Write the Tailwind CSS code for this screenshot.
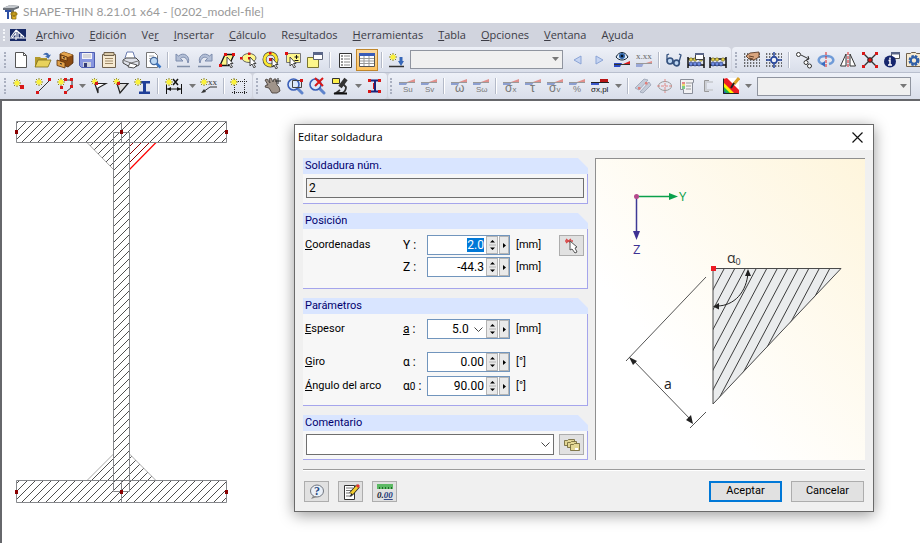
<!DOCTYPE html>
<html lang="es">
<head>
  <meta charset="UTF-8">
  <meta name="viewport" content="width=device-width, initial-scale=1.0">
  <title>SHAPE-THIN 8.21.01 x64 - [0202_model-file]</title>
  <script src="https://cdn.jsdelivr.net/npm/@tailwindcss/browser@4"></script>
  <script>
    // El primer campo se abre con el valor seleccionado
    document.addEventListener("DOMContentLoaded", () => {
      const campo = document.getElementById("coordY");
      campo.focus();
      campo.select();
    });
  </script>
</head>
<body class="flex h-screen flex-col overflow-hidden bg-white font-['Open_Sans',sans-serif] text-[11px] text-[#3c3c46]">

  <!-- Símbolos compartidos por varios iconos -->
  <svg class="hidden">
    <symbol id="star" viewBox="0 0 8 8"><path d="M4 0v8M0 4h8M1 1l6 6M7 1l-6 6" stroke="#8a8420" stroke-width="1"/><circle cx="4" cy="4" r="2.6" fill="#fbf23c"/></symbol>
    <symbol id="wedge" viewBox="0 0 18 6"><path d="M1 3h9l-2 3H1z" fill="#8c9fd0"/><path d="M9 3l8-3v3z" fill="#e0908c"/><path d="M1 3.500h16" stroke="#999"/></symbol>
    <symbol id="caret" viewBox="0 0 7 4"><path d="M0 0h7l-3.500 4z" fill="#777"/></symbol>
    <symbol id="abacus" viewBox="0 0 18 12"><path d="M1 1v11M17 1v11M1 3h16M1 9h16" stroke="#111" stroke-width="1.5"/><g fill="#e6d34a" stroke="#6b6425" stroke-width=".6"><circle cx="4" cy="3.500" r="1.700"/><circle cx="8" cy="3.500" r="1.700"/><circle cx="14" cy="3.500" r="1.700"/></g><g fill="#6f8ce0" stroke="#1a2c70" stroke-width=".6"><circle cx="4" cy="8" r="2"/><circle cx="8" cy="8" r="2"/><circle cx="12" cy="8" r="2"/></g></symbol>
    <symbol id="lens" viewBox="0 0 18 18"><path d="M11 11l5 5" stroke="#5f84cc" stroke-width="3" stroke-linecap="round"/><circle cx="7.500" cy="7.500" r="5.500" fill="#dbe8fb" stroke="#3a5fb8" stroke-width="1.600"/></symbol>
    <symbol id="arrow" viewBox="0 0 8 11"><path d="M1 0v9l2-2 2 4 1.500-1-2-3.500H7z" fill="#fff" stroke="#333" stroke-width=".9"/></symbol>
    <symbol id="dots" viewBox="0 0 18 18"><path d="M1 3h16M1 6h16M1 9h16M1 12h16M1 15h16" stroke="#444" stroke-width="1.300" stroke-dasharray="1.300 1.700"/></symbol>
    <symbol id="chevron" viewBox="0 0 9 5"><path d="M.500 .500l4 4 4-4" fill="none" stroke="#444"/></symbol>
  </svg>

  <!-- Título -->
  <header class="flex h-[23px] shrink-0 items-center gap-1 bg-white pl-[3px] text-[#999]">
    <svg class="size-4" viewBox="0 0 16 16"><path d="M0 4l7-3 9 1v2l-5 2v8l-3 1V6L0 6z" fill="#6b7077"/><path d="M0 4l7-3 9 1-5 2z" fill="#c3c7cc"/><path d="M2 6h6v2H6v7H4V8H2z" fill="#2e50a5"/><path d="M9 8h4v7H9zM8 9h6v2H8z" fill="#e2b52a" stroke="#8b6a10" stroke-width=".7"/><path d="M10 12h2" stroke="#6b5010"/></svg>
    <h1 class="font-[Lato,sans-serif] text-xs">SHAPE-THIN 8.21.01 x64 - [0202_model-file]</h1>
  </header>

  <!-- Menú -->
  <nav class="flex h-6 shrink-0 items-center bg-[#d1d4de] pl-[3px]">
    <span class="h-3 border-l-2 border-dotted border-[#f4f6fa]"></span>
    <svg class="ml-[5px] mr-[10px] h-3 w-4" viewBox="0 0 16 12"><path d="M0 0h16v12H0z" fill="#182a66"/><path d="M0 9h16M6 1v10M6 1L1 8M6 1l8 7M6 4l-4 5M8 3v6M11 6v3" stroke="#fff" stroke-width="1.100"/></svg>
    <div class="flex gap-[15px]">
      <a href="#"><u>A</u>rchivo</a>
      <a href="#"><u>E</u>dición</a>
      <a href="#">Ve<u>r</u></a>
      <a href="#"><u>I</u>nsertar</a>
      <a href="#"><u>C</u>álculo</a>
      <a href="#">Res<u>u</u>ltados</a>
      <a href="#"><u>H</u>erramientas</a>
      <a href="#"><u>T</u>abla</a>
      <a href="#"><u>O</u>pciones</a>
      <a href="#"><u>V</u>entana</a>
      <a href="#">A<u>y</u>uda</a>
    </div>
  </nav>

  <!-- Barra de herramientas 1 -->
  <div class="flex h-[26px] shrink-0 overflow-hidden bg-[#d1d4de]">
    <div class="flex shrink-0 items-center rounded-r border-b border-[#b9bfce] bg-linear-to-b from-[#eef1f8] to-[#d9deea] pr-[2px]">
      <span class="ml-1 mr-1 h-4 border-l-2 border-dotted border-[#aab0c0]"></span>
      <button class="grid w-[22px] place-items-center" aria-label="Nuevo"><svg class="size-[18px]" viewBox="0 0 18 18"><path d="M3.500 1.500h8l3 3v12h-11z" fill="#fff" stroke="#555"/><path d="M11.500 1.500v3h3" fill="none" stroke="#555"/></svg></button>
      <button class="grid w-[22px] place-items-center" aria-label="Abrir"><svg class="size-[18px]" viewBox="0 0 18 18"><path d="M1 16V6h5l1 1h6v9z" fill="#b39a2c"/><path d="M1 16l3-7h13l-3 7z" fill="#e8d25c" stroke="#7c6c1c" stroke-width=".8"/><path d="M9 4c2-3 5-3 6 0l2-.500-2.500 4L11 5.500l2-.500c-1-1.500-2-1.500-4-1z" fill="#3e6bb0"/></svg></button>
      <button class="grid w-[22px] place-items-center" aria-label="Archivador"><svg class="size-[18px]" viewBox="0 0 18 18"><path d="M4 3l4-2 9 3v8l-5 4-8-3z" fill="#8a4a12" stroke="#4b2708" stroke-width=".8"/><path d="M4 3l4-2 9 3-5 2z" fill="#e3a44d"/><path d="M1 9l8 2.500V17L1 14.500zM5 4l6 2v4L5 8z" fill="#e0a04a" stroke="#5a300a" stroke-width=".8"/><path d="M4 12.500l2 .600M7 6.500l2 .600" stroke="#222"/></svg></button>
      <button class="grid w-[22px] place-items-center" aria-label="Guardar"><svg class="size-[18px]" viewBox="0 0 18 18"><path d="M1.500 1.500h15v15h-13l-2-2z" fill="#8796e0" stroke="#4d5db0"/><path d="M4 2h10v6H4z" fill="#f4f4fa"/><path d="M5 4h8M5 6h8" stroke="#aaa" stroke-width=".8"/><path d="M5 11h8v5H5z" fill="#cfd3dd"/><path d="M6 12h3v4H6z" fill="#333c78"/></svg></button>
      <button class="grid w-[22px] place-items-center" aria-label="Portapapeles"><svg class="size-[18px]" viewBox="0 0 18 18"><path d="M2.500 3.500h13v13h-13z" fill="#f6ead2" stroke="#6f604c"/><path d="M4 1.500h10v3H4z" fill="#d9c9a8" stroke="#6f604c"/><path d="M5 7.500h8M5 10h8M5 12.500h8" stroke="#a08a68"/></svg></button>
      <button class="grid w-[22px] place-items-center" aria-label="Imprimir"><svg class="size-[18px]" viewBox="0 0 18 18"><path d="M3 7L5 1h6l2 6" fill="#fff" stroke="#6a7cb0"/><path d="M1 9l3-2h10l3 3v4l-4 2H8l-7-4z" fill="#dfe2ea" stroke="#444"/><path d="M2 9.500l7 2.500 7-2" fill="none" stroke="#777"/><path d="M8 12l-2 4 6 1 3-3z" fill="#fff" stroke="#333" stroke-width=".8"/></svg></button>
      <button class="grid w-[22px] place-items-center" aria-label="Vista previa"><svg class="size-[18px]" viewBox="0 0 18 18"><path d="M2.500 1.500h8l3 3v12h-11z" fill="#fff" stroke="#777"/><path d="M5 5h5M5 7.500h6M5 10h4" stroke="#aaa"/><circle cx="10" cy="10" r="3.600" fill="#bcd8f4" stroke="#47699c" stroke-width="1.200"/><path d="M12.500 12.500l4 4" stroke="#3b76c4" stroke-width="2.500"/></svg></button>
      <span class="mx-[3px] h-4 w-[2px] border-r border-white bg-[#b4bac8]"></span>
      <button class="grid w-[22px] place-items-center" aria-label="Deshacer"><svg class="size-[18px]" viewBox="0 0 18 18"><path d="M2 3v7h7L6.500 7.500C9 5 13 6 14 12c3-6-4-12-9.500-7z" fill="#b3bfd6" stroke="#7c8cad"/><path d="M3 15.500h13" stroke="#8290aa" stroke-width="1.500"/></svg></button>
      <button class="grid w-[22px] place-items-center" aria-label="Rehacer"><svg class="size-[18px]" viewBox="0 0 18 18"><path d="M16 3v7H9l2.500-2.500C9 5 5 6 4 12 1 6 8 0 13.500 5z" fill="#b3bfd6" stroke="#7c8cad"/><path d="M2 15.500h13" stroke="#8290aa" stroke-width="1.500"/></svg></button>
      <button class="grid w-[22px] place-items-center" aria-label="Selección por rombo"><svg class="size-[18px]" viewBox="0 0 18 18"><path d="M7 3.500h9l-5 11H2z" fill="#fdf68a" stroke="#111" stroke-width="1.300"/><path d="M6 2h3v3H6zM14 2h3v3h-3zM1 13h3v3H1z" fill="#e01010"/><use href="#arrow" x="8" y="6" width="8" height="11"/></svg></button>
      <button class="grid w-[22px] place-items-center" aria-label="Selección por elipse"><svg class="size-[18px]" viewBox="0 0 18 18"><ellipse cx="9" cy="7" rx="7" ry="4.500" fill="#fdf68a" stroke="#666"/><path d="M0 6h2.500v2.500H0zM8 1.500h2.500V4H8zM8 6h2.500v2.500H8z" fill="#e01010"/><use href="#arrow" x="9" y="6" width="8" height="11"/></svg></button>
      <button class="grid w-[22px] place-items-center" aria-label="Selección por corona"><svg class="size-[18px]" viewBox="0 0 18 18"><circle cx="8.500" cy="8.500" r="6" fill="none" stroke="#444" stroke-width="4"/><circle cx="8.500" cy="8.500" r="6" fill="none" stroke="#fbe830" stroke-width="2.600"/><path d="M7 1h2.500v2.500H7zM7 7h3v3H7z" fill="#e01010"/><use href="#arrow" x="9" y="7" width="8" height="11"/></svg></button>
      <button class="grid w-[22px] place-items-center" aria-label="Selección por ventana"><svg class="size-[18px]" viewBox="0 0 18 18"><path d="M2.500 2.500h14v9h-14z" fill="#fdf68a" stroke="#777"/><path d="M10.500 6h4M12.500 4v4M10.500 9.500h4" stroke="#111"/><path d="M1 1h3v3H1z" fill="#e01010"/><use href="#arrow" x="5" y="6" width="8" height="11"/></svg></button>
      <button class="grid w-[22px] place-items-center" aria-label="Ventana nueva"><svg class="size-[18px]" viewBox="0 0 18 18"><path d="M1.500 6.500h11v10h-11z" fill="#fdf68a" stroke="#7a7430"/><path d="M7.500 1.500h9v7h-9z" fill="#fff" stroke="#5c6275"/><path d="M7 1h10v3H7z" fill="#5a6688"/></svg></button>
      <span class="mx-[3px] h-4 w-[2px] border-r border-white bg-[#b4bac8]"></span>
      <button class="grid w-[22px] place-items-center" aria-label="Navegador"><svg class="size-[18px]" viewBox="0 0 18 18"><path d="M3.500 2.500h12v14h-12z" fill="#fff" stroke="#333"/><path d="M5 5h2M5 8h2M5 11h2M5 14h2" stroke="#333"/><path d="M8 5h6M8 8h6M8 11h6M8 14h6" stroke="#888"/></svg></button>
      <button class="grid h-[22px] w-[22px] place-items-center border border-[#c0862c] bg-linear-to-b from-[#fbd9a0] to-[#ffc45e]" aria-label="Tablas" aria-pressed="true"><svg class="h-4 w-[18px]" viewBox="0 0 18 16"><path d="M1.500 1.500h15v13h-15z" fill="#fff" stroke="#555"/><path d="M1 1h16v3H1z" fill="#3a5cb8"/><path d="M2 6.500h14M2 9h14M2 11.500h14M6 4v10M11 4v10" stroke="#999"/></svg></button>
      <span class="mx-[3px] h-4 w-[2px] border-r border-white bg-[#b4bac8]"></span>
      <button class="grid w-[22px] place-items-center" aria-label="Caso nuevo"><svg class="size-[18px]" viewBox="0 0 18 18"><use href="#star" x="1" y="2" width="8" height="8"/><path d="M13 6v6" stroke="#3566b8" stroke-width="3"/><path d="M10 10h6l-3 5z" fill="#3566b8"/><path d="M1 15.500h15" stroke="#333" stroke-width="1.500"/></svg></button>
      <div class="relative mx-[2px] w-[153px]">
        <select aria-label="Caso de carga" class="block h-[19px] w-full appearance-none border border-[#8f949f] bg-[#f0f0f0]"><option></option></select>
        <svg class="pointer-events-none absolute right-[4px] top-[7px] h-1 w-[7px]"><use href="#caret"/></svg>
      </div>
      <button class="ml-[2px] grid w-[22px] place-items-center" aria-label="Anterior"><svg class="size-[18px]" viewBox="0 0 18 18"><path d="M12 5v8L5 9z" fill="#c5d4f2" stroke="#8ba4d6"/></svg></button>
      <button class="grid w-[22px] place-items-center" aria-label="Siguiente"><svg class="size-[18px]" viewBox="0 0 18 18"><path d="M5 5v8l7-4z" fill="#c5d4f2" stroke="#8ba4d6"/></svg></button>
      <button class="grid w-[22px] place-items-center" aria-label="Mostrar resultados"><svg class="size-[18px]" viewBox="0 0 18 18"><path d="M3 6c3-6 9-6 12 0-3 4-9 4-12 0z" fill="#dfeaf8" stroke="#123"/><circle cx="9" cy="5" r="3" fill="#2c62a8"/><circle cx="9" cy="5" r="1.300" fill="#012"/><path d="M1 12h8l-2 4H1z" fill="#2a49c4"/><path d="M8 14l9-4v4z" fill="#d91c1c"/><path d="M1 13.500h16" stroke="#333"/></svg></button>
      <button class="grid w-[22px] place-items-center" aria-label="Mostrar valores"><svg class="size-[18px]" viewBox="0 0 18 18"><text x="1" y="8" font-family="Liberation Serif" font-size="9" fill="#666">x.xx</text><path d="M1 12h8l-2 4H1z" fill="#9aa8d8"/><path d="M8 13l9-3v3z" fill="#e0908c"/><path d="M1 12.500h16" stroke="#999"/></svg></button>
      <span class="mx-[3px] h-4 w-[2px] border-r border-white bg-[#b4bac8]"></span>
      <button class="grid w-[22px] place-items-center" aria-label="Gafas"><svg class="size-[18px]" viewBox="0 0 18 18"><g fill="#bdd6f2" stroke="#34517e" stroke-width="1.700"><circle cx="5" cy="10" r="3"/><circle cx="11.500" cy="12" r="2.800"/></g><path d="M2 9V4l2-1M14 11l2-7-2-1" fill="none" stroke="#34517e" stroke-width="1.300"/></svg></button>
      <button class="grid w-[22px] place-items-center" aria-label="Calcular ventana"><svg class="size-[18px]" viewBox="0 0 18 18"><use href="#abacus" x="0" y="5" width="18" height="12"/><path d="M8.500 2.500h8v6h-8z" fill="#fff" stroke="#444"/><path d="M8 2h9v2H8z" fill="#5a6688"/></svg></button>
      <button class="grid w-[22px] place-items-center" aria-label="Calcular"><svg class="size-[18px]" viewBox="0 0 18 18"><use href="#abacus" x="0" y="5" width="18" height="12"/></svg></button>
    </div>
    <div class="ml-px flex shrink-0 grow items-center rounded-l border-b border-[#b9bfce] bg-linear-to-b from-[#eef1f8] to-[#d9deea]">
      <span class="ml-[3px] mr-1 h-4 border-l-2 border-dotted border-[#aab0c0]"></span>
      <button class="grid w-[22px] place-items-center" aria-label="Editar rejilla"><svg class="size-[18px]" viewBox="0 0 18 18"><use href="#dots" width="18" height="18"/><path d="M3 5l4-3 9-1v5l-5 3-5-1z" fill="#d9a57e" stroke="#4a2c18" stroke-width=".8"/><path d="M6 5l5 1M6 7l4 1" stroke="#4a2c18" stroke-width=".8"/></svg></button>
      <button class="grid w-[22px] place-items-center" aria-label="Rejilla"><svg class="size-[18px]" viewBox="0 0 18 18"><use href="#dots" width="18" height="18"/><circle cx="9" cy="9" r="3" fill="#eef1f8" stroke="#27479e" stroke-width="1.500"/><path d="M9 1v5M9 12v5M1 9h5M12 9h5" stroke="#27479e" stroke-width="1.500"/></svg></button>
      <span class="mx-[3px] h-4 w-[2px] border-r border-white bg-[#b4bac8]"></span>
      <button class="grid w-[22px] place-items-center" aria-label="Mover o copiar"><svg class="size-[18px]" viewBox="0 0 18 18"><g fill="#fff" stroke="#333"><circle cx="3.500" cy="3.500" r="2"/><circle cx="11" cy="11.500" r="2"/><circle cx="14.500" cy="15" r="2"/></g><path d="M6 4l8 4M14 8l-1-3M14 8l-3 1" stroke="#333"/></svg></button>
      <button class="grid w-[22px] place-items-center" aria-label="Girar"><svg class="size-[18px]" viewBox="0 0 18 18"><path d="M6 13C-1 11 1 5 9 5s10 6 3 8" fill="none" stroke="#6f9bd8" stroke-width="2.500"/><path d="M8 10v6l-4-3z" fill="#3a6cc0"/><path d="M9 1v16" stroke="#d22" stroke-dasharray="3 1"/></svg></button>
      <button class="grid w-[22px] place-items-center" aria-label="Simetría"><svg class="size-[18px]" viewBox="0 0 18 18"><path d="M7 3v12H1.500zM11 3v12h5.500z" fill="#fff" stroke="#333"/><path d="M9 1v16" stroke="#d22" stroke-dasharray="3 1"/></svg></button>
      <button class="grid w-[22px] place-items-center" aria-label="Dividir"><svg class="size-[18px]" viewBox="0 0 18 18"><path d="M2 2l14 14M16 2L2 16" stroke="#333" stroke-width="1.400"/><path d="M1 1h3v3H1zM14 1h3v3h-3zM1 14h3v3H1zM14 14h3v3h-3z" fill="#d81818"/><circle cx="9" cy="9" r="2.300" fill="#d81818" stroke="#222"/></svg></button>
      <button class="grid w-[22px] place-items-center" aria-label="Información"><svg class="size-[18px]" viewBox="0 0 18 18"><path d="M8.500 1.500h8v6h-8z" fill="#fff" stroke="#555"/><path d="M8 1h9v2.500H8z" fill="#5a6688"/><circle cx="7" cy="10.500" r="6" fill="#16266e"/><path d="M7 6.500v2M5.500 9.500H7v4.500M5 14h4" stroke="#fff" stroke-width="1.500" fill="none"/></svg></button>
      <button class="grid w-[22px] place-items-center" aria-label="Configuración"><svg class="size-[18px]" viewBox="0 0 18 18"><path d="M1.500 2.500h4l1-1h4l1 1h5v13h-15z" fill="#f6ead2" stroke="#6f604c"/><circle cx="9" cy="9.500" r="4" fill="none" stroke="#2f5fa8" stroke-width="3" stroke-dasharray="2.200 1"/><circle cx="9" cy="9.500" r="3.200" fill="none" stroke="#2f5fa8" stroke-width="2"/></svg></button>
    </div>
  </div>

  <!-- Barra de herramientas 2 -->
  <div class="flex h-[26px] shrink-0 overflow-hidden bg-[#d1d4de]">
    <div class="flex w-[252px] shrink-0 items-center rounded-r bg-linear-to-b from-[#eef1f8] to-[#d9deea]">
      <span class="ml-1 mr-1 h-4 border-l-2 border-dotted border-[#aab0c0]"></span>
      <button class="grid w-[22px] place-items-center" aria-label="Nudo nuevo"><svg class="size-[18px]" viewBox="0 0 18 18"><use href="#star" x="1" y="2" width="8" height="8"/><path d="M8 8h4v4H8z" fill="#d81818"/></svg></button>
      <button class="grid w-[22px] place-items-center" aria-label="Línea nueva"><svg class="size-[18px]" viewBox="0 0 18 18"><path d="M4 15L16 3" stroke="#333"/><use href="#star" x="1" y="1" width="8" height="8"/><path d="M14 1h3v3h-3zM2 14h3v3H2z" fill="#d81818"/></svg></button>
      <button class="grid w-[22px] place-items-center" aria-label="Polilínea nueva"><svg class="size-[18px]" viewBox="0 0 18 18"><path d="M8 3h8v7l-6 5" fill="none" stroke="#333"/><use href="#star" x="1" y="1" width="8" height="8"/><path d="M14 1h3v3h-3zM14 8h3v3h-3zM8 14h3v3H8zM8 1h3v3H8zM4 9h3v3H4z" fill="#d81818"/></svg></button>
      <button class="grid w-3 place-items-center" aria-label="Más líneas"><svg class="h-1 w-[7px]"><use href="#caret"/></svg></button>
      <button class="grid w-[22px] place-items-center" aria-label="Elemento nuevo"><svg class="size-[18px]" viewBox="0 0 18 18"><path d="M4 6.500h12L8 11v5L5 7" fill="#fff" stroke="#222" stroke-width="1.200"/><use href="#star" x="1" y="1" width="7" height="7"/><path d="M5 5h3v3H5z" fill="#d81818"/></svg></button>
      <button class="grid w-[22px] place-items-center" aria-label="Soldadura nueva"><svg class="size-[18px]" viewBox="0 0 18 18"><path d="M5 6.500h11L8 16z" fill="#ddd" stroke="#222" stroke-width="1.200"/><use href="#star" x="1" y="1" width="7" height="7"/><path d="M5 5h3v3H5z" fill="#d81818"/></svg></button>
      <button class="grid w-[22px] place-items-center" aria-label="Sección nueva"><svg class="size-[18px]" viewBox="0 0 18 18"><path d="M5 4h11v2.500h-4v8h4V17H5v-2.500h4v-8H5z" fill="#1f3f98"/><use href="#star" x="0" y="1" width="8" height="8"/></svg></button>
      <span class="mx-[3px] h-4 w-[2px] border-r border-white bg-[#b4bac8]"></span>
      <button class="grid w-6 place-items-center" aria-label="Cota nueva"><svg class="size-[18px]" viewBox="0 0 18 18"><path d="M1.500 7v10M16.500 7v10M2 12h14" stroke="#111"/><path d="M2 12l4-2v4zM16 12l-4-2v4z" fill="#111"/><path d="M8 2l5 6M13 2L8 8" stroke="#111" stroke-width="1.500"/><use href="#star" x="0" y="1" width="8" height="8"/></svg></button>
      <button class="grid w-3 place-items-center" aria-label="Más cotas"><svg class="h-1 w-[7px]"><use href="#caret"/></svg></button>
      <button class="grid w-[22px] place-items-center" aria-label="Comentario nuevo"><svg class="size-[18px]" viewBox="0 0 18 18"><path d="M3 15l7-5h7" fill="none" stroke="#333"/><path d="M1 16l5-1-2-3z" fill="#333"/><text x="8" y="8" font-family="Liberation Serif" font-size="9" fill="#333">xx</text><use href="#star" x="0" y="1" width="8" height="8"/></svg></button>
      <span class="mx-[3px] h-4 w-[2px] border-r border-white bg-[#b4bac8]"></span>
      <button class="grid w-[22px] place-items-center" aria-label="Marco nuevo"><svg class="size-[18px]" viewBox="0 0 18 18"><path d="M4.500 2v15M14.500 2v15M2 4.500h15M2 15.500h15" stroke="#222" stroke-dasharray="1 1"/><use href="#star" x="0" y="1" width="8" height="8"/></svg></button>
    </div>
    <div class="ml-px flex w-[134px] shrink-0 items-center rounded bg-linear-to-b from-[#eef1f8] to-[#d9deea]">
      <span class="ml-[3px] mr-1 h-4 border-l-2 border-dotted border-[#aab0c0]"></span>
      <button class="grid w-[22px] place-items-center" aria-label="Desplazar vista"><svg class="size-[18px]" viewBox="0 0 18 18"><path d="M1 3l2-1 3 4-1-4 2-1 2 4 1-3 2 0 1 6 2 2 1 4-3 2H8l-3-5-4-1 1-2 2 0z" fill="#a0948a" stroke="#4c443e" stroke-width=".9"/><path d="M14 1v6M11 4h6" stroke="#222"/></svg></button>
      <button class="grid w-[22px] place-items-center" aria-label="Zoom ventana"><svg class="size-[18px]" viewBox="0 0 18 18"><use href="#lens" width="18" height="18"/><path d="M6.500 3.500h9v7h-9z" fill="none" stroke="#444"/><path d="M14 2h3v3h-3z" fill="#d81818"/></svg></button>
      <button class="grid w-[22px] place-items-center" aria-label="Quitar zoom"><svg class="size-[18px]" viewBox="0 0 18 18"><use href="#lens" width="18" height="18"/><path d="M7 1l8 8M15 1L7 9" stroke="#d81818" stroke-width="2"/></svg></button>
      <button class="grid w-6 place-items-center" aria-label="Microscopio"><svg class="size-[18px]" viewBox="0 0 18 18"><path d="M15 2l-6 8" stroke="#333" stroke-width="4"/><path d="M12 7l3 3c0 3-1 5-4 6H5l4-3" fill="none" stroke="#333" stroke-width="1.800"/><path d="M3 16.500h13" stroke="#111" stroke-width="2"/><path d="M1.500 1.500h7v5h-7z" fill="#fdf04a" stroke="#333"/></svg></button>
      <button class="grid w-3 place-items-center" aria-label="Más vistas"><svg class="h-1 w-[7px]"><use href="#caret"/></svg></button>
      <button class="grid w-[22px] place-items-center" aria-label="Perfil"><svg class="size-[18px]" viewBox="0 0 18 18"><path d="M4 3.500h10M4 14.500h10M9 4v10" stroke="#1a237a" stroke-width="2"/><path d="M2 2h3v3H2zM12 2h3v3h-3zM2 13h3v3H2zM12 13h3v3h-3z" fill="#d81818"/><path d="M7.500 6v6" stroke="#d81818"/></svg></button>
    </div>
    <div class="ml-px flex shrink-0 grow items-center rounded-l bg-linear-to-b from-[#eef1f8] to-[#d9deea] font-['Liberation_Sans',sans-serif]">
      <span class="ml-[2px] mr-1 h-4 border-l-2 border-dotted border-[#aab0c0]"></span>
      <button class="grid w-[22px] place-items-center" aria-label="Su"><svg class="size-[18px]" viewBox="0 0 18 18"><use href="#wedge" x="0" y="2" width="18" height="6"/><text x="5" y="15" font-size="8" fill="#777">Su</text></svg></button>
      <button class="grid w-[22px] place-items-center" aria-label="Sv"><svg class="size-[18px]" viewBox="0 0 18 18"><use href="#wedge" x="0" y="2" width="18" height="6"/><text x="5" y="15" font-size="8" fill="#777">Sv</text></svg></button>
      <span class="mx-[3px] h-4 w-[2px] border-r border-white bg-[#b4bac8]"></span>
      <button class="grid w-[22px] place-items-center" aria-label="Omega"><svg class="size-[18px]" viewBox="0 0 18 18"><use href="#wedge" x="0" y="2" width="18" height="6"/><text x="5" y="15" font-size="12" fill="#777">ω</text></svg></button>
      <button class="grid w-[22px] place-items-center" aria-label="S omega"><svg class="size-[18px]" viewBox="0 0 18 18"><use href="#wedge" x="0" y="2" width="18" height="6"/><text x="4" y="15" font-size="8" fill="#777">Sω</text></svg></button>
      <span class="mx-[3px] h-4 w-[2px] border-r border-white bg-[#b4bac8]"></span>
      <button class="grid w-[22px] place-items-center" aria-label="Sigma x"><svg class="size-[18px]" viewBox="0 0 18 18"><use href="#wedge" x="0" y="2" width="18" height="6"/><text x="3" y="15" font-size="12" fill="#777">σ<tspan font-size="8">x</tspan></text></svg></button>
      <button class="grid w-[22px] place-items-center" aria-label="Tau"><svg class="size-[18px]" viewBox="0 0 18 18"><use href="#wedge" x="0" y="2" width="18" height="6"/><text x="6" y="15" font-size="13" fill="#777">τ</text></svg></button>
      <button class="grid w-[22px] place-items-center" aria-label="Sigma v"><svg class="size-[18px]" viewBox="0 0 18 18"><use href="#wedge" x="0" y="2" width="18" height="6"/><text x="3" y="15" font-size="12" fill="#777">σ<tspan font-size="8">v</tspan></text></svg></button>
      <button class="grid w-[22px] place-items-center" aria-label="Porcentaje"><svg class="size-[18px]" viewBox="0 0 18 18"><use href="#wedge" x="0" y="2" width="18" height="6"/><text x="5" y="15" font-size="9" fill="#777">%</text></svg></button>
      <button class="grid w-6 place-items-center" aria-label="Sigma x plástica"><svg class="h-[18px] w-5" viewBox="0 0 20 18"><path d="M1 5h8v3H1z" fill="#3a58c8"/><path d="M10 2h8v3h-8z" fill="#b81414"/><path d="M1 5.500h18" stroke="#222"/><text x="1" y="15" font-size="8" fill="#111">σx,pl</text></svg></button>
      <button class="grid w-3 place-items-center" aria-label="Más tensiones"><svg class="h-1 w-[7px]"><use href="#caret"/></svg></button>
      <span class="mx-[3px] h-4 w-[2px] border-r border-white bg-[#b4bac8]"></span>
      <button class="grid w-[22px] place-items-center" aria-label="Partes"><svg class="size-[18px]" viewBox="0 0 18 18"><path d="M1 11L10 2l4 1-9 10zM6 15l9-10 2 3-8 8z" fill="#c4cbd8" stroke="#9aa3b5" stroke-width=".8"/><path d="M4 10h2.500v2.500H4zM11 5h2.500v2.500H11z" fill="#e0807c"/></svg></button>
      <button class="grid w-[22px] place-items-center" aria-label="Núcleo"><svg class="size-[18px]" viewBox="0 0 18 18"><ellipse cx="9" cy="9" rx="6.500" ry="4.500" fill="none" stroke="#999"/><path d="M9 2v14M1 9h16" stroke="#e08a86" stroke-dasharray="3 1"/></svg></button>
      <button class="grid w-[22px] place-items-center" aria-label="Leyenda"><svg class="size-[18px]" viewBox="0 0 18 18"><path d="M2.500 2.500h13v3h-1v11h-9v-4h-3z" fill="#f2f2f4" stroke="#8a8f9a"/><path d="M4 5h3v2H4z" fill="#e58a8a"/><path d="M4 7h3v2H4z" fill="#e8dc70"/><path d="M4 9h3v3H4z" fill="#7fc98a"/><path d="M8 6h6M8 9h5M8 12h5" stroke="#999"/></svg></button>
      <button class="grid w-[22px] place-items-center" aria-label="Perfil C"><svg class="size-[18px]" viewBox="0 0 18 18"><path d="M13 5H6v8h7" fill="none" stroke="#cdd0d6" stroke-width="2"/><path d="M9 3.500H4.500v11H9" fill="none" stroke="#999"/></svg></button>
      <button class="grid w-[22px] place-items-center" aria-label="Colores"><svg class="size-[18px]" viewBox="0 0 18 18"><path d="M1 1h16v16H1z" fill="#fff"/><path d="M1 2l4-1 12 12v4H1z" fill="#ed1c24"/><path d="M1 5l12 12H1z" fill="#fff200"/><path d="M1 9l8 8H1z" fill="#22b14c"/><path d="M1 13l4 4H1z" fill="#2346d8"/><path d="M1.500 1.500v15h15" fill="none" stroke="#222"/><path d="M17 1l-5 6" stroke="#d9a32a" stroke-width="3"/><path d="M12 6l-3 5" stroke="#222" stroke-width="2"/></svg></button>
      <button class="grid w-3 place-items-center" aria-label="Más colores"><svg class="h-1 w-[7px]"><use href="#caret"/></svg></button>
      <div class="relative ml-[3px] w-[154px]">
        <select aria-label="Vista de resultados" class="block h-[19px] w-full appearance-none border border-[#8f949f] bg-[#f0f0f0]"><option></option></select>
        <svg class="pointer-events-none absolute right-[4px] top-[7px] h-1 w-[7px]"><use href="#caret"/></svg>
      </div>
    </div>
  </div>

  <!-- Área de trabajo -->
  <main class="grow border-l-2 border-t-2 border-[#66676b] bg-white pl-3 pt-[19px]">
    <svg class="h-[384px] w-[216px]" viewBox="14 120 216 384" fill="none">
      <defs>
        <pattern id="hatch" x="4" width="8" height="8" patternUnits="userSpaceOnUse"><path d="M-1 9L9 -1" stroke="#222" stroke-width=".8"/></pattern>
        <pattern id="hatchRed" x="4" width="8" height="8" patternUnits="userSpaceOnUse"><path d="M-1 9L9 -1" stroke="#8b0000"/></pattern>
      </defs>
      <path d="M87 142.500h26.500v27zM113.500 454v26.500H87zM129.500 454v26.500H156z" fill="url(#hatch)" stroke="#aaa"/>
      <path d="M129.500 142.500H156l-26.500 27z" fill="url(#hatchRed)"/>
      <path d="M156 142.500l-26.500 27" stroke="#f00" stroke-width="1.200"/>
      <path d="M16.500 121.500h210v21h-210zM16.500 480.500h210v22h-210z" fill="url(#hatch)" stroke="#85878b"/>
      <path d="M113.500 142.500h16v338h-16z" fill="url(#hatch)"/>
      <path d="M113.500 132.500h16v359h-16zM121.500 121v21M121.500 480v22" stroke="#85878b"/>
      <path d="M15 130h3v4h-3zM120 130h3v4h-3zM225 130h3v4h-3zM15 490h3v4h-3zM120 490h3v4h-3zM225 490h3v4h-3z" fill="#8b0000"/>
    </svg>
  </main>

  <!-- Diálogo -->
  <form role="dialog" aria-labelledby="tituloDialogo" class="absolute left-[294px] top-[124px] w-[580px] border border-[#6a6a6a] bg-[#f0f0f0] font-[Roboto,sans-serif] text-black shadow-[0_3px_14px_rgba(0,0,0,0.4)]">
    <div class="flex h-[25px] items-center justify-between bg-white pl-[3px] pr-[10px]">
      <h2 id="tituloDialogo" class="font-['Open_Sans',sans-serif]">Editar soldadura</h2>
      <button type="button" aria-label="Cerrar"><svg class="size-[11px]" viewBox="0 0 11 11"><path d="M.500 .500l10 10M10.500 .500l-10 10" stroke="#111" stroke-width="1.200"/></svg></button>
    </div>

    <div class="flex gap-[7px] px-2 pt-2">
      <div class="flex w-[285px] flex-col gap-[9px]">
        <section class="h-[46px]">
          <h3 class="h-4 bg-[#d9e5ff] pl-[2px] leading-4 text-[#00006e] [clip-path:polygon(0_0,275px_0,100%_10px,100%_100%,0_100%)]"><label for="numero">Soldadura núm.</label></h3>
          <div class="h-[30px] border-b border-r border-[#a5a5ec] bg-[#f7f7f7] px-[3px] pt-1">
            <input id="numero" readonly value="2" class="block h-5 w-full border border-[#6f6f6f] bg-[#f0f0f0] px-[2px] text-xs">
          </div>
        </section>

        <section class="h-[76px]">
          <h3 class="h-4 bg-[#d9e5ff] pl-[2px] leading-4 text-[#00006e] [clip-path:polygon(0_0,275px_0,100%_10px,100%_100%,0_100%)]">Posición</h3>
          <div class="flex h-[60px] items-start border-b border-r border-[#a5a5ec] bg-[#f7f7f7] pl-[2px] pr-[3px] pt-[6px]">
            <div class="grid grow grid-cols-[98px_24px_83px_1fr] items-center gap-y-[2px]">
              <span><u>C</u>oordenadas</span>
              <label for="coordY" class="text-xs">Y :</label>
              <div class="flex h-5 items-center border border-[#7195bd] bg-white">
                <input id="coordY" value="2.0" class="w-0 grow pr-px text-right text-xs leading-3 outline-none selection:bg-[#0078d7] selection:text-white">
                <button type="button" aria-label="Variar Y" class="ml-px grid h-[18px] w-3 place-items-center border border-[#b5b5b5] bg-[#e9e9e9]"><svg class="h-[14px] w-[7px]" viewBox="0 0 7 14"><path d="M1 4.500h5L3.500 2zM1 9.500h5L3.500 12z" fill="#000"/><path d="M-2 7h11" stroke="#b5b5b5"/></svg></button>
                <button type="button" aria-label="Opciones de Y" class="ml-px grid h-[18px] w-[10px] place-items-center border border-[#b5b5b5] bg-[#e9e9e9]"><svg class="h-[5px] w-[3px]" viewBox="0 0 3 5"><path d="M0 0v5l3-2.500z" fill="#000"/></svg></button>
              </div>
              <span class="pl-[6px]">[mm]</span>
              <span></span>
              <label for="coordZ" class="text-xs">Z :</label>
              <div class="flex h-5 items-center border border-[#7195bd] bg-white">
                <input id="coordZ" value="-44.3" class="w-0 grow pr-px text-right text-xs leading-3 outline-none">
                <button type="button" aria-label="Variar Z" class="ml-px grid h-[18px] w-3 place-items-center border border-[#b5b5b5] bg-[#e9e9e9]"><svg class="h-[14px] w-[7px]" viewBox="0 0 7 14"><path d="M1 4.500h5L3.500 2zM1 9.500h5L3.500 12z" fill="#000"/><path d="M-2 7h11" stroke="#b5b5b5"/></svg></button>
                <button type="button" aria-label="Opciones de Z" class="ml-px grid h-[18px] w-[10px] place-items-center border border-[#b5b5b5] bg-[#e9e9e9]"><svg class="h-[5px] w-[3px]" viewBox="0 0 3 5"><path d="M0 0v5l3-2.500z" fill="#000"/></svg></button>
              </div>
              <span class="pl-[6px]">[mm]</span>
            </div>
            <button type="button" aria-label="Seleccionar nudo" class="grid h-[21px] w-[25px] place-items-center border border-[#adadad] bg-[#e1e1e1]"><svg class="size-4" viewBox="0 0 16 16"><path d="M2 1l5 4M7 1L2 5M1 3h8" stroke="#d84a4a" stroke-width="1.300"/><path d="M6 3v9l2-1 3 4 2-1-2-4 2-1z" fill="#fff" stroke="#555"/></svg></button>
          </div>
        </section>

        <section class="h-[108px]">
          <h3 class="h-4 bg-[#d9e5ff] pl-[2px] leading-4 text-[#00006e] [clip-path:polygon(0_0,275px_0,100%_10px,100%_100%,0_100%)]">Parámetros</h3>
          <div class="h-[92px] border-b border-r border-[#a5a5ec] bg-[#f7f7f7] pl-[2px] pt-[5px]">
            <div class="grid grid-cols-[98px_24px_83px_1fr] items-center">
              <span><u>E</u>spesor</span>
              <label for="espesor" class="text-xs"><u>a</u> :</label>
              <div class="flex h-5 items-center border border-[#7195bd] bg-white">
                <div class="relative grow">
                  <select id="espesor" class="block w-full appearance-none pl-6 text-xs leading-4 outline-none"><option>5.0</option></select>
                  <svg class="pointer-events-none absolute right-[2px] top-[6px] h-[5px] w-[9px]"><use href="#chevron"/></svg>
                </div>
                <button type="button" aria-label="Variar espesor" class="ml-px grid h-[18px] w-3 place-items-center border border-[#b5b5b5] bg-[#e9e9e9]"><svg class="h-[14px] w-[7px]" viewBox="0 0 7 14"><path d="M1 4.500h5L3.500 2zM1 9.500h5L3.500 12z" fill="#000"/><path d="M-2 7h11" stroke="#b5b5b5"/></svg></button>
                <button type="button" aria-label="Opciones de espesor" class="ml-px grid h-[18px] w-[10px] place-items-center border border-[#b5b5b5] bg-[#e9e9e9]"><svg class="h-[5px] w-[3px]" viewBox="0 0 3 5"><path d="M0 0v5l3-2.500z" fill="#000"/></svg></button>
              </div>
              <span class="pl-[6px]">[mm]</span>
            </div>
            <div class="mt-[13px] grid grid-cols-[98px_24px_83px_1fr] items-center gap-y-1">
              <span><u>G</u>iro</span>
              <label for="giro" class="text-xs">α :</label>
              <div class="flex h-5 items-center border border-[#7195bd] bg-white">
                <input id="giro" value="0.00" class="w-0 grow pr-px text-right text-xs leading-3 outline-none">
                <button type="button" aria-label="Variar giro" class="ml-px grid h-[18px] w-3 place-items-center border border-[#b5b5b5] bg-[#e9e9e9]"><svg class="h-[14px] w-[7px]" viewBox="0 0 7 14"><path d="M1 4.500h5L3.500 2zM1 9.500h5L3.500 12z" fill="#000"/><path d="M-2 7h11" stroke="#b5b5b5"/></svg></button>
                <button type="button" aria-label="Opciones de giro" class="ml-px grid h-[18px] w-[10px] place-items-center border border-[#b5b5b5] bg-[#e9e9e9]"><svg class="h-[5px] w-[3px]" viewBox="0 0 3 5"><path d="M0 0v5l3-2.500z" fill="#000"/></svg></button>
              </div>
              <span class="pl-[6px]">[°]</span>
              <span><u>Á</u>ngulo del arco</span>
              <label for="angulo" class="whitespace-nowrap text-xs">α<span class="text-[10px]">0</span> :</label>
              <div class="flex h-5 items-center border border-[#7195bd] bg-white">
                <input id="angulo" value="90.00" class="w-0 grow pr-px text-right text-xs leading-3 outline-none">
                <button type="button" aria-label="Variar ángulo" class="ml-px grid h-[18px] w-3 place-items-center border border-[#b5b5b5] bg-[#e9e9e9]"><svg class="h-[14px] w-[7px]" viewBox="0 0 7 14"><path d="M1 4.500h5L3.500 2zM1 9.500h5L3.500 12z" fill="#000"/><path d="M-2 7h11" stroke="#b5b5b5"/></svg></button>
                <button type="button" aria-label="Opciones de ángulo" class="ml-px grid h-[18px] w-[10px] place-items-center border border-[#b5b5b5] bg-[#e9e9e9]"><svg class="h-[5px] w-[3px]" viewBox="0 0 3 5"><path d="M0 0v5l3-2.500z" fill="#000"/></svg></button>
              </div>
              <span class="pl-[6px]">[°]</span>
            </div>
          </div>
        </section>

        <section class="h-[45px]">
          <h3 class="h-4 bg-[#d9e5ff] pl-[2px] leading-4 text-[#00006e] [clip-path:polygon(0_0,275px_0,100%_10px,100%_100%,0_100%)]"><label for="comentario">Comentario</label></h3>
          <div class="flex h-[29px] items-start gap-[5px] border-b border-r border-[#a5a5ec] bg-[#f7f7f7] px-[3px] pt-[3px]">
            <div class="relative grow">
              <select id="comentario" class="block h-[21px] w-full appearance-none border border-[#6f6f6f] bg-white"><option></option></select>
              <svg class="pointer-events-none absolute right-1 top-2 h-[5px] w-[9px]"><use href="#chevron"/></svg>
            </div>
            <button type="button" aria-label="Biblioteca de comentarios" class="grid h-[21px] w-[25px] place-items-center border border-[#adadad] bg-[#e1e1e1]"><svg class="h-3 w-4" viewBox="0 0 16 12"><g fill="#e3d795" stroke="#6a6030" stroke-width=".8"><path d="M.500 1.500h3l1-1h6v6H.500z"/><path d="M3.500 3.500h3l1-1h5v6h-9z"/><path d="M6.500 5.500h3l1-1h5v7h-9z"/></g><path d="M11 9h3v2h-3z" fill="#fff"/></svg></button>
          </div>
        </section>
      </div>

      <!-- Esquema de la soldadura -->
      <div class="h-[302px] w-[270px] border-l border-t border-[#8f8f8f] bg-linear-to-tr from-white from-30% to-[#fef5dc]">
        <svg class="h-full w-full" viewBox="596 159 269 301" fill="none" font-family="Open Sans, sans-serif">
          <defs>
            <clipPath id="triangulo"><path d="M713 269h128L713 404z"/></clipPath>
          </defs>
          <path d="M637 196.500h34" stroke="#0aa04b" stroke-width="1.500"/>
          <path d="M669 193l9 3.500-9 3.500z" fill="#0aa04b"/>
          <path d="M636.500 197v36" stroke="#3d3a96" stroke-width="1.500"/>
          <path d="M633 231h7l-3.500 9z" fill="#3d3193"/>
          <circle cx="636.500" cy="196.500" r="2.500" fill="#b5498c"/>
          <text x="679" y="201" font-size="13" fill="#0aa04b">Y</text>
          <text x="633" y="254" font-size="13" fill="#3d3193">Z</text>
          <path d="M713 269h128L713 404z" fill="#eaeced"/>
          <path clip-path="url(#triangulo)" stroke="#3c3c3c" d="M724 269l-90 170M734.500 269l-90 170M745 269l-90 170M756 269l-90 170M766.500 269l-90 170M777 269l-90 170M787.500 269l-90 170M798 269l-90 170M808.500 269l-90 170M819 269l-90 170M829.500 269l-90 170"/>
          <path d="M841 268.500H713v135.500L841 268.500" stroke="#4a4a4a"/>
          <path d="M748 272c-1 20-14 34-31 34" stroke="#222"/>
          <path d="M748 269l3 7h-6zM713 306.500l6-3.500v6.500z" fill="#222"/>
          <path d="M711 266h5v5h-5z" fill="#ed1c24"/>
          <text x="727" y="263" font-size="14" fill="#333">α<tspan dy="2" font-size="9">0</tspan></text>
          <path d="M706 277l-80 84M706 412l-16 16M632 359l60 62" stroke="#555"/>
          <path d="M629 357l8 4-4 4zM693 424l-2-9-5 5z" fill="#222"/>
          <text x="664" y="389" font-size="14" fill="#222">a</text>
        </svg>
      </div>
    </div>

    <footer class="mx-2 mt-[9px] flex items-center gap-[9px] border-t border-[#9c9c9c] pb-[9px] pl-px pt-[11px] shadow-[inset_0_1px_0_white]">
      <button type="button" aria-label="Ayuda" class="grid h-[21px] w-[25px] place-items-center border border-[#adadad] bg-[#e1e1e1]"><svg class="h-4 w-[18px]" viewBox="0 0 18 16"><ellipse cx="9" cy="7" rx="6.500" ry="6" fill="#e9eff7" stroke="#70757e"/><path d="M5 12l-2 3 6-2" fill="#888"/><text x="6" y="11" font-family="Liberation Serif" font-weight="bold" font-size="12" fill="#274a82">?</text></svg></button>
      <button type="button" aria-label="Notas" class="grid h-[21px] w-[25px] place-items-center border border-[#adadad] bg-[#e1e1e1]"><svg class="h-4 w-[18px]" viewBox="0 0 18 16"><path d="M2.500 1.500h10v14h-10z" fill="#fff" stroke="#333"/><path d="M4 4h7M4 6.500h6M4 9h4M4 12h6" stroke="#777"/><path d="M16 2L9 10" stroke="#222" stroke-width="4.500"/><path d="M16 2L9 10" stroke="#f2cc2e" stroke-width="3"/><path d="M15 3l2-2" stroke="#d33" stroke-width="3"/><path d="M9.500 9l-2 4 3.500-2z" fill="#222"/></svg></button>
      <button type="button" aria-label="Unidades y decimales" class="grid h-[21px] w-[25px] place-items-center border border-[#adadad] bg-[#e1e1e1]"><svg class="h-4 w-[18px]" viewBox="0 0 18 16"><path d="M1 0h16v5H1z" fill="#5cb964"/><path d="M3.500 3v2M6.500 3v2M9.500 3v2M12.500 3v2M15.500 3v2" stroke="#1d6b26"/><text x="1" y="14" font-family="Liberation Serif" font-weight="bold" font-style="italic" font-size="9" fill="#223">0.<tspan fill="#223a80" text-decoration="underline">00</tspan></text></svg></button>
      <button type="submit" class="ml-auto h-[21px] w-[73px] border-2 border-[#0078d7] bg-[#e1e1e1]">Aceptar</button>
      <button type="button" class="mr-px h-[21px] w-[73px] border border-[#adadad] bg-[#e1e1e1]">Cancelar</button>
    </footer>
  </form>
</body>
</html>
